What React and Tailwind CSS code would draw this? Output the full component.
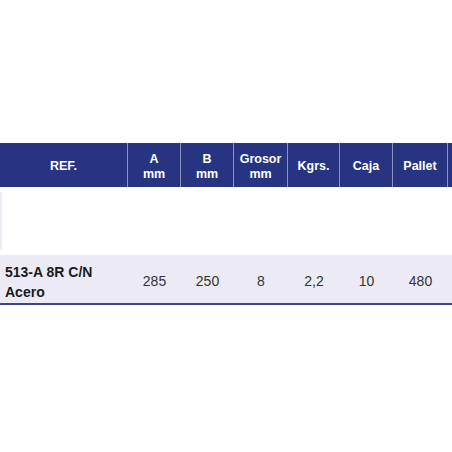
export default function App() {
  const cols = [
    { key: 'ref', label: ['REF.'], w: 'w-[128px]' },
    { key: 'a', label: ['A', 'mm'], w: 'w-[53px]' },
    { key: 'b', label: ['B', 'mm'], w: 'w-[53px]' },
    { key: 'g', label: ['Grosor', 'mm'], w: 'w-[54px]' },
    { key: 'k', label: ['Kgrs.'], w: 'w-[52px]' },
    { key: 'c', label: ['Caja'], w: 'w-[53px]' },
    { key: 'p', label: ['Pallet'], w: 'w-[55px]' },
    { key: 'x', label: [''], w: 'w-[40px]' },
  ];

  const row = ['513-A 8R C/N Acero', '285', '250', '8', '2,2', '10', '480', ''];

  return (
    <div className="w-[452px] h-[452px] bg-white overflow-hidden font-['Liberation_Sans',Arial,sans-serif]">
      <div className="h-[143px]" />
      <div className="flex w-[500px] h-[44px] bg-[#273481]">
        {cols.map((c) => (
          <div
            key={c.key}
            className={`${c.w} shrink-0 h-full border-r border-[#8d94bd] flex flex-col items-center justify-center pt-[3px] text-white font-bold text-[12.5px] leading-[15px]`}
          >
            {c.label.map((l, i) => (
              <span key={i}>{l}</span>
            ))}
          </div>
        ))}
      </div>
      <div className="h-[68px] flex pt-[5px] pb-[5px]">
        <div className="w-[2px] bg-[#ecebf6]" />
      </div>
      <div className="flex w-[500px] h-[50px] pt-[5px] bg-[#ebeaf5] border-b-2 border-[#3a4591]">
        {cols.map((c, i) => (
          <div
            key={c.key}
            className={`${c.w} shrink-0 h-full flex items-center ${
              i === 0
                ? 'justify-start pl-[5px] font-bold text-[14px] leading-[20px] text-[#1a1a1a]'
                : 'justify-center text-[14px] text-[#333]'
            }`}
          >
            {i === 0 ? (
              <span className="w-[100px]">{row[i]}</span>
            ) : (
              row[i]
            )}
          </div>
        ))}
      </div>
    </div>
  );
}
